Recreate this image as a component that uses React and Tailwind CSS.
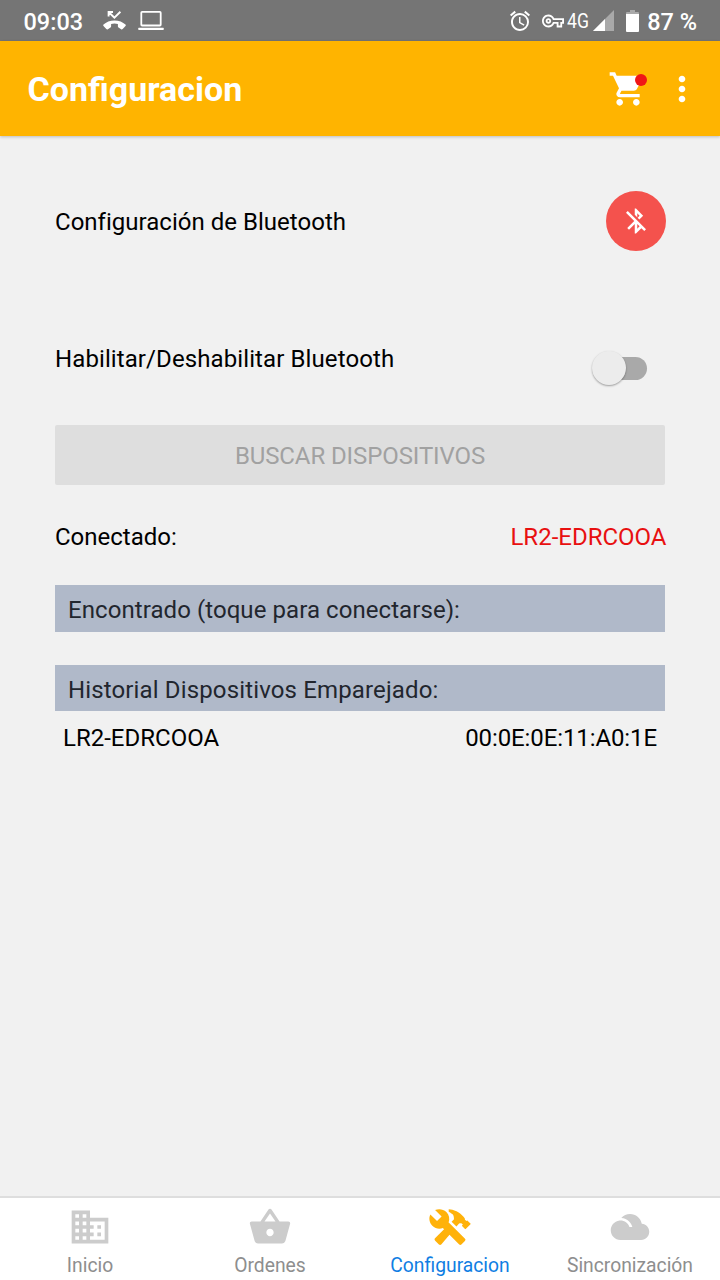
import React from 'react';
import {
  MdAlarm,
  MdBluetoothDisabled,
  MdBusiness,
  MdMoreVert,
  MdOutlineVpnKey,
  MdShoppingBasket,
  MdShoppingCart,
} from 'react-icons/md';
import { IoMdCloudy, IoMdConstruct } from 'react-icons/io';

const tabs = [
  { label: 'Inicio', icon: MdBusiness },
  { label: 'Ordenes', icon: MdShoppingBasket },
  { label: 'Configuracion', icon: IoMdConstruct, active: true },
  { label: 'Sincronización', icon: IoMdCloudy },
];

function MissedCallIcon() {
  return (
    <svg width="23" height="19" viewBox="0 0 23 19">
      <path d="M5.6 5.4V1H10M5.6 1L11.4 6.6L17.4 0.8" fill="none" stroke="currentColor" strokeWidth="1.9" />
      <path
        d="M11.5 9.4C7 9.4 3.2 11 .5 13.5c-.5.5-.5 1 0 1.5l2.8 3c.5.5 1 .6 1.6.2l2.6-1.8c.4-.3.6-.6.6-1v-2.3c2.2-.7 4.6-.7 6.8 0v2.3c0 .4.2.7.6 1l2.6 1.8c.6.4 1.1.3 1.6-.2l2.8-3c.5-.5.5-1 0-1.5C19.8 11 16 9.4 11.5 9.4z"
        fill="currentColor"
      />
    </svg>
  );
}

function LaptopIcon() {
  return (
    <svg width="26" height="19" viewBox="0 0 26 19" fill="none">
      <rect x="3.3" y="0.9" width="19.4" height="13.6" rx="0.8" stroke="currentColor" strokeWidth="1.8" />
      <rect x="0.3" y="16.8" width="25.4" height="2.2" rx="0.4" fill="currentColor" />
    </svg>
  );
}

function SignalIcon() {
  return (
    <svg width="21" height="21" viewBox="0 0 21 21">
      <path d="M0 21L21 0v21z" fill="#a9a9a9" />
      <path d="M0 21L12 9v12z" fill="#fff" />
    </svg>
  );
}

function BatteryIcon() {
  return (
    <svg width="13" height="22" viewBox="0 0 13 22">
      <path d="M4 0h5v2h3a1 1 0 0 1 1 1v2H0V3a1 1 0 0 1 1-1h3z" fill="#a9a9a9" />
      <path d="M0 4h13v17a1 1 0 0 1-1 1H1a1 1 0 0 1-1-1z" fill="#fff" />
    </svg>
  );
}

function StatusBar() {
  return (
    <div className="flex items-center h-[41px] shrink-0 bg-[#757575] text-white pl-[23.5px] pr-[23px]">
      <span className="w-[79px] pt-[5px] text-[23.5px] font-medium leading-none">09:03</span>
      <MissedCallIcon />
      <div className="ml-[12.5px]">
        <LaptopIcon />
      </div>
      <MdAlarm size={24} className="ml-auto" />
      <MdOutlineVpnKey size={22} className="ml-[10px]" />
      <span className="w-[22px] ml-[3px] text-[20px] leading-none">
        <span className="inline-block origin-left scale-x-[0.88]">4G</span>
      </span>
      <div className="ml-[4px]">
        <SignalIcon />
      </div>
      <div className="ml-[12px]">
        <BatteryIcon />
      </div>
      <span className="ml-[8px] pt-[5px] text-[23.5px] font-medium leading-none whitespace-nowrap">87 %</span>
    </div>
  );
}

function Header() {
  return (
    <div className="flex items-center h-[95px] shrink-0 bg-[#ffb400] text-white pl-[27.5px] pr-[18px] shadow-[0_1px_3px_rgba(0,0,0,0.22)]">
      <h1 className="pt-[2px] text-[34px] font-bold">Configuracion</h1>
      <div className="relative ml-auto">
        <MdShoppingCart size={40} />
        <div className="absolute left-[27px] top-[5px] size-3 rounded-full bg-[#f01616]" />
      </div>
      <MdMoreVert size={40} className="ml-[14px]" />
    </div>
  );
}

function Toggle() {
  return (
    <div className="flex items-center mt-[10px] mr-[18px]">
      <div className="size-[34px] rounded-full bg-[#ececec] shadow-[0_1px_2px_rgba(0,0,0,0.35)] z-10" />
      <div className="w-[34px] h-[23px] -ml-[13px] rounded-r-full bg-[#a9a9a9]" />
    </div>
  );
}

function TabBar() {
  return (
    <div className="mt-auto flex h-[84px] shrink-0 border-t-2 border-[#dedede] bg-white">
      {tabs.map(({ label, icon: Icon, active }) => (
        <div key={label} className="flex-1 flex flex-col items-center pt-[7px]">
          <Icon size={44} className={active ? 'text-[#ffb20a]' : 'text-[#cccccc]'} />
          <span className={`mt-[2px] text-[19.3px] leading-[29px] ${active ? 'text-[#0f7ee3]' : 'text-[#8e8e8e]'}`}>
            {label}
          </span>
        </div>
      ))}
    </div>
  );
}

function App() {
  return (
    <div className="flex flex-col w-[720px] h-[1280px] overflow-hidden bg-[#f1f1f1] font-['Roboto',sans-serif] text-black">
      <StatusBar />
      <Header />
      <div className="flex flex-col px-[55px] text-[24px] leading-9">
        <div className="flex items-center justify-between mt-[55px] h-[60px]">
          <span className="pt-[2px] tracking-[0.02px]">Configuración de Bluetooth</span>
          <div className="flex items-center justify-center size-[60px] -mr-[0.5px] rounded-full bg-[#f4524d] text-white">
            <MdBluetoothDisabled size={30} />
          </div>
        </div>

        <div className="flex items-start justify-between mt-[90px] h-[46px]">
          <span className="tracking-[0.1px]">Habilitar/Deshabilitar Bluetooth</span>
          <Toggle />
        </div>

        <button className="mt-[38px] h-[60px] pt-[2px] rounded-[2px] bg-[#dedede] text-[#a1a1a1] tracking-[-0.1px]">
          BUSCAR DISPOSITIVOS
        </button>

        <div className="flex justify-between mt-[34px]">
          <span>Conectado:</span>
          <span className="-mr-[1.5px] text-[#e81010]">LR2-EDRCOOA</span>
        </div>

        <div className="mt-[30px] h-[47px] pl-[13px] pt-[7px] bg-[#b0b9c9] text-[#22262e] tracking-[0.07px]">
          Encontrado (toque para conectarse):
        </div>
        <div className="mt-[33px] h-[46px] pl-[13px] pt-[7px] bg-[#b0b9c9] text-[#22262e] tracking-[0.14px]">
          Historial Dispositivos Emparejado:
        </div>
        <div className="flex justify-between mt-[9px] pl-2 pr-[8px]">
          <span>LR2-EDRCOOA</span>
          <span className="tracking-[-0.1px]">00:0E:0E:11:A0:1E</span>
        </div>
      </div>
      <TabBar />
    </div>
  );
}

export default App;
